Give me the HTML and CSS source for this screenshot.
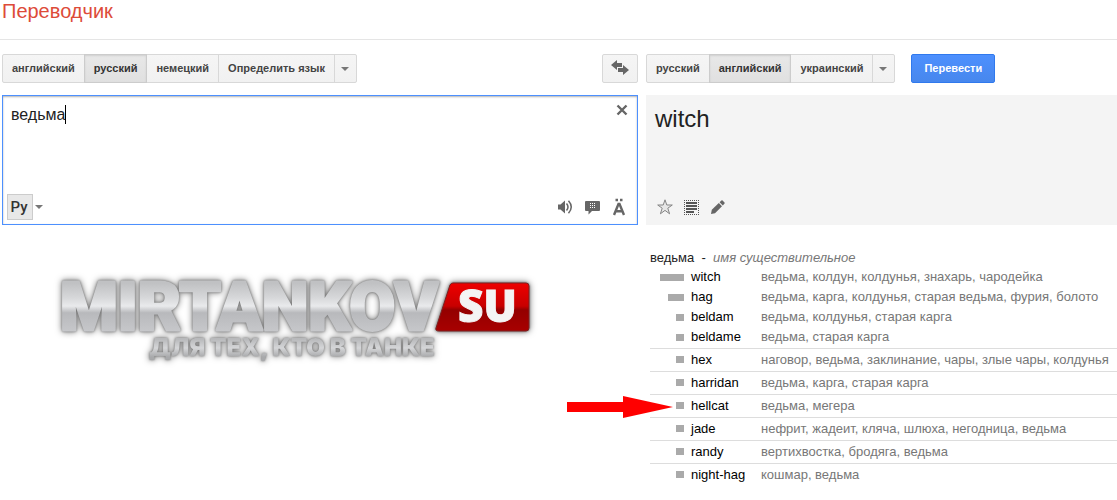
FILE: index.html
```
<!DOCTYPE html>
<html lang="ru">
<head>
    <meta charset="UTF-8">
    <meta name="viewport" content="width=device-width, initial-scale=1.0">
    <title>Переводчик</title>
    <link rel="stylesheet" href="styles.css">
</head>
<body>
    <header class="header">
        <h1 class="title">Переводчик</h1>
    </header>

    <main class="translator">
        <div class="toolbar">
            <div class="lang-group">
                <button class="btn">английский</button>
                <button class="btn active">русский</button>
                <button class="btn">немецкий</button>
                <button class="btn">Определить язык</button>
                <button class="btn btn-menu" aria-label="Другие языки"><span class="caret-down"></span></button>
            </div>
            <button class="btn btn-swap" aria-label="Поменять языки">
                <svg width="18" height="16" viewBox="0 0 18 16" fill="#666">
                    <path d="M0 5 6 0V3H11V7H6V10Z"/>
                    <path d="M18 10 12 5V8H7V12H12V15Z"/>
                </svg>
            </button>
        </div>

        <div class="toolbar toolbar-target">
            <div class="lang-group">
                <button class="btn">русский</button>
                <button class="btn active">английский</button>
                <button class="btn">украинский</button>
                <button class="btn btn-menu" aria-label="Другие языки"><span class="caret-down"></span></button>
            </div>
            <button class="btn btn-translate">Перевести</button>
        </div>

        <div class="source">
            <div class="source-top">
                <textarea class="source-text" aria-label="Исходный текст" spellcheck="false">ведьма</textarea>
                <span class="text-cursor"></span>
                <button class="icon-btn" aria-label="Очистить">
                    <svg width="12" height="12" viewBox="0 0 12 12" fill="none" stroke="#666" stroke-width="2.4">
                        <path d="M1.5 1.5 10.5 10.5M10.5 1.5 1.5 10.5"/>
                    </svg>
                </button>
            </div>
            <div class="source-bottom">
                <button class="input-tool">Ру</button>
                <button class="icon-btn input-menu" aria-label="Способ ввода"><span class="caret-down"></span></button>
                <div class="source-icons">
                    <button class="icon-btn" aria-label="Прослушать">
                        <svg width="16" height="16" viewBox="0 0 16 16" fill="#666">
                            <path d="M1 5.5H3.5L8 1.5V14.5L3.5 10.5H1Z"/>
                            <path d="M9.5 4.5Q12.5 8 9.5 11.5M11.5 1.8Q17 8 11.5 14.2" fill="none" stroke="#666" stroke-width="1.5"/>
                        </svg>
                    </button>
                    <button class="icon-btn" aria-label="Разговорник">
                        <svg width="16" height="16" viewBox="0 0 16 16">
                            <path d="M1 2H14Q15 2 15 3V11Q15 12 14 12H7L3.5 15.5V12H1Q0 12 0 11V3Q0 2 1 2Z" fill="#666"/>
                            <path d="M5 4.5H10M5 6.5H10M5 8.5H10" stroke="#fff" stroke-dasharray="1 1"/>
                        </svg>
                    </button>
                    <button class="icon-btn" aria-label="Транскрипция">
                        <svg width="12" height="18" viewBox="0 0 12 18" fill="none" stroke="#666">
                            <path d="M1 17 5.5 6H6.5L11 17M3 13.2H9" stroke-width="2.4"/>
                            <path d="M2.5 2H5M7 2H9.5" stroke-width="2.6"/>
                        </svg>
                    </button>
                </div>
            </div>
        </div>

        <div class="result">
            <div class="result-text">witch</div>
            <div class="result-icons">
                <button class="icon-btn" aria-label="Сохранить">
                    <svg width="16" height="16" viewBox="0 0 16 16">
                        <path d="M8 .8 9.8 6H15.3L10.8 9.2 12.6 14.8 8 11.4 3.4 14.8 5.2 9.2 .7 6H6.2Z" fill="#e6e6e6" stroke="#858585"/>
                    </svg>
                </button>
                <button class="icon-btn" aria-label="Выделить всё">
                    <svg width="16" height="16" viewBox="0 0 16 16" fill="none" stroke="#555">
                        <path d="M0 1.5H15M0 15.5H15M.5 1V16M14.5 1V16" stroke-dasharray="1 1"/>
                        <path d="M2 4H13M2 7H13M2 10H13M2 13H10" stroke-width="2"/>
                    </svg>
                </button>
                <button class="icon-btn" aria-label="Изменить">
                    <svg width="14" height="14" viewBox="0 0 14 14" fill="#666">
                        <path d="M0 14 .8 9.8 7.8 3 11 6.2 4 13.2Z"/>
                        <path d="M8.6 2.2 10.4 .5Q11 0 11.6 .5L13.5 2.4Q14 3 13.5 3.6L11.8 5.4Z"/>
                    </svg>
                </button>
            </div>
        </div>

        <div class="brand">
            <svg class="logo" width="490" height="100" viewBox="0 0 490 100" role="img" aria-label="MIRTANKOV SU">
                <defs>
                    <linearGradient id="steel" x1="0" y1="23" x2="0" y2="71" gradientUnits="userSpaceOnUse">
                        <stop offset="0" stop-color="#c0c1c3"/>
                        <stop offset=".3" stop-color="#d6d7d9"/>
                        <stop offset=".48" stop-color="#e9eaec"/>
                        <stop offset=".62" stop-color="#b8b9bc"/>
                        <stop offset="1" stop-color="#c6c7ca"/>
                    </linearGradient>
                    <linearGradient id="steel-small" x1="0" y1="79" x2="0" y2="97" gradientUnits="userSpaceOnUse">
                        <stop offset="0" stop-color="#b8b9bb"/>
                        <stop offset=".5" stop-color="#d5d6d8"/>
                        <stop offset="1" stop-color="#a8a9ab"/>
                    </linearGradient>
                    <linearGradient id="red" x1="0" y1="0" x2="0" y2="1">
                        <stop offset="0" stop-color="#ee0000"/>
                        <stop offset=".48" stop-color="#c80000"/>
                        <stop offset=".56" stop-color="#940000"/>
                        <stop offset="1" stop-color="#a80000"/>
                    </linearGradient>
                </defs>
                <text class="logo-name" x="17" y="70" fill="url(#steel)" stroke="url(#steel)">MIRTANKOV</text>
                <path class="logo-plate" d="M410 23H483Q486 23 486 26V68Q486 71 483 71H396Q392 71 393 68L407 25Q408 23 410 23Z" fill="url(#red)"/>
                <text class="logo-su" x="415" y="62">SU</text>
                <text class="logo-slogan" x="106" y="96" fill="url(#steel-small)">ДЛЯ ТЕХ, КТО В ТАНКЕ</text>
            </svg>
        </div>

        <div class="dictionary">
            <div class="dict-head">ведьма&nbsp; - &nbsp;<i>имя существительное</i></div>
            <table class="dict">
                <tr>
                    <td class="freq"><span class="bar bar-high"></span></td>
                    <td class="word">witch</td>
                    <td class="meaning">ведьма, колдун, колдунья, знахарь, чародейка</td>
                </tr>
                <tr>
                    <td class="freq"><span class="bar bar-mid"></span></td>
                    <td class="word">hag</td>
                    <td class="meaning">ведьма, карга, колдунья, старая ведьма, фурия, болото</td>
                </tr>
                <tr>
                    <td class="freq"><span class="bar"></span></td>
                    <td class="word">beldam</td>
                    <td class="meaning">ведьма, колдунья, старая карга</td>
                </tr>
                <tr>
                    <td class="freq"><span class="bar"></span></td>
                    <td class="word">beldame</td>
                    <td class="meaning">ведьма, старая карга</td>
                </tr>
                <tr class="ruled">
                    <td class="freq"><span class="bar"></span></td>
                    <td class="word">hex</td>
                    <td class="meaning">наговор, ведьма, заклинание, чары, злые чары, колдунья</td>
                </tr>
                <tr class="ruled">
                    <td class="freq"><span class="bar"></span></td>
                    <td class="word">harridan</td>
                    <td class="meaning">ведьма, карга, старая карга</td>
                </tr>
                <tr class="ruled">
                    <td class="freq">
                        <span class="bar"></span>
                        <svg class="arrow" width="106" height="22" viewBox="0 0 106 22" fill="#f00">
                            <path d="M0 6H56V0L106 11 56 22V16H0Z"/>
                        </svg>
                    </td>
                    <td class="word">hellcat</td>
                    <td class="meaning">ведьма, мегера</td>
                </tr>
                <tr class="ruled">
                    <td class="freq"><span class="bar"></span></td>
                    <td class="word">jade</td>
                    <td class="meaning">нефрит, жадеит, кляча, шлюха, негодница, ведьма</td>
                </tr>
                <tr class="ruled">
                    <td class="freq"><span class="bar"></span></td>
                    <td class="word">randy</td>
                    <td class="meaning">вертихвостка, бродяга, ведьма</td>
                </tr>
                <tr class="ruled">
                    <td class="freq"><span class="bar"></span></td>
                    <td class="word">night-hag</td>
                    <td class="meaning">кошмар, ведьма</td>
                </tr>
            </table>
        </div>
    </main>
</body>
</html>
```
FILE: styles.css
```
* {
    box-sizing: border-box;
}

body {
    margin: 0;
    background-color: #fff;
    color: #222;
    font-family: "Liberation Sans", Arial, sans-serif;
    font-size: 13px;
}

button {
    font-family: inherit;
    cursor: pointer;
}

svg {
    display: block;
}

.header {
    height: 40px;
    padding-left: 2px;
    border-bottom: 1px solid #e5e5e5;
}

.title {
    margin: 0;
    color: #dd4b39;
    font-size: 20px;
    font-weight: normal;
    line-height: 22px;
}

.translator {
    display: grid;
    grid-template-columns: minmax(0, 636fr) minmax(0, 471fr);
    column-gap: 8px;
    padding: 14px 0 0 2px;
}

/* Language bars */
.toolbar {
    display: flex;
    justify-content: space-between;
    margin-bottom: 12px;
}

.toolbar-target {
    justify-content: flex-start;
    gap: 16px;
}

.lang-group {
    display: flex;
}

.btn {
    height: 29px;
    padding: 0 9px 2px;
    border: 1px solid #d8d8d8;
    background: linear-gradient(#f5f5f5, #f1f1f1);
    color: #444;
    font-size: 11px;
    font-weight: bold;
    white-space: nowrap;
}

.lang-group .btn + .btn {
    margin-left: -1px;
}

.lang-group .btn:first-child {
    border-radius: 2px 0 0 2px;
}

.lang-group .btn:last-child {
    border-radius: 0 2px 2px 0;
}

.btn.active {
    position: relative;
    border-color: #ccc;
    background: linear-gradient(#e8e8e8, #e0e0e0);
    box-shadow: inset 0 1px 2px rgba(0, 0, 0, 0.1);
    color: #333;
}

.lang-group .btn-menu {
    width: 23px;
    padding: 0 6px;
}

.btn-swap {
    width: 36px;
    padding: 0 8px 2px;
    border-radius: 2px;
}

.btn-translate {
    padding: 0 12px 2px;
    border-color: #3079ed;
    border-radius: 2px;
    background: linear-gradient(#4d90fe, #4787ed);
    color: #fff;
}

.caret-down {
    display: block;
    width: 8px;
    border: 4px solid transparent;
    border-top-color: #777;
    border-bottom: 0;
}

/* Source box */
.source {
    display: flex;
    flex-direction: column;
    justify-content: space-between;
    height: 130px;
    border: 1px solid #4d90fe;
    box-shadow: inset 0 1px 2px rgba(0, 0, 0, 0.3);
}

.source-top {
    position: relative;
    display: flex;
    align-items: flex-start;
    padding: 8px 9px 0 8px;
}

.source-text {
    flex: 1;
    height: 60px;
    padding: 0;
    border: 0;
    outline: 0;
    background: none;
    color: #222;
    font-family: inherit;
    font-size: 16px;
    line-height: 22px;
    resize: none;
}

.text-cursor {
    position: absolute;
    top: 9px;
    left: 62px;
    width: 1px;
    height: 19px;
    background-color: #000;
}

.icon-btn {
    padding: 0;
    border: 0;
    background: none;
}

.source-bottom {
    display: flex;
    align-items: center;
    padding: 0 12px 4px 4px;
}

.input-tool {
    width: 26px;
    height: 26px;
    padding: 0 2px 0 0;
    border: 1px solid #ccc;
    background-color: #e8e8e8;
    color: #333;
    font-family: Roboto, sans-serif;
    font-size: 15px;
    font-weight: 500;
}

.input-menu {
    margin-left: 2px;
}

.source-icons {
    display: flex;
    align-items: center;
    gap: 12px;
    margin-left: auto;
}

/* Result box */
.result {
    display: flex;
    flex-direction: column;
    justify-content: space-between;
    height: 130px;
    padding: 8px 9px 10px;
    background-color: #f4f4f4;
}

.result-text {
    font-size: 24px;
    line-height: 32px;
}

.result-icons {
    display: flex;
    align-items: center;
    gap: 11px;
    padding-left: 2px;
}

/* Logo */
.brand {
    padding: 35px 0 0 41px;
}

.logo {
    overflow: visible;
    filter: drop-shadow(0 0 1px #777) drop-shadow(0 0 3px rgba(0, 0, 0, 0.5));
}

.logo-name {
    font-family: Roboto, sans-serif;
    font-size: 66px;
    font-weight: 900;
    stroke-width: 3px;
    stroke-linejoin: round;
}

.logo-su {
    font-family: "Open Sans", sans-serif;
    font-size: 44px;
    font-weight: 800;
    fill: #f4f4f4;
    stroke: #f4f4f4;
}

.logo-plate {
    stroke: #7d2020;
}

.logo-slogan {
    font-family: Inter, sans-serif;
    font-size: 24px;
    font-weight: 900;
}

/* Dictionary */
.dictionary {
    padding: 24px 0 0 4px;
}

.dict-head {
    margin-bottom: 2px;
    line-height: 17px;
}

.dict-head i,
.meaning {
    color: #777;
}

.dict {
    width: 100%;
    border-spacing: 0;
    table-layout: fixed;
}

.dict td {
    height: 20px;
    padding: 0;
    line-height: 18px;
    vertical-align: top;
    white-space: nowrap;
}

.dict .ruled td {
    height: 23px;
    border-top: 1px solid #ddd;
    line-height: 22px;
}

.dict .freq {
    position: relative;
    width: 41px;
    padding: 0 7px 1px 0;
    vertical-align: middle;
}

.bar {
    display: block;
    width: 8px;
    height: 7px;
    margin-left: auto;
    background-color: #aaa;
}

.bar-mid {
    width: 16px;
}

.bar-high {
    width: 24px;
}

.word {
    width: 70px;
    color: #000;
}

.arrow {
    position: absolute;
    top: 1px;
    right: 18px;
}
```
